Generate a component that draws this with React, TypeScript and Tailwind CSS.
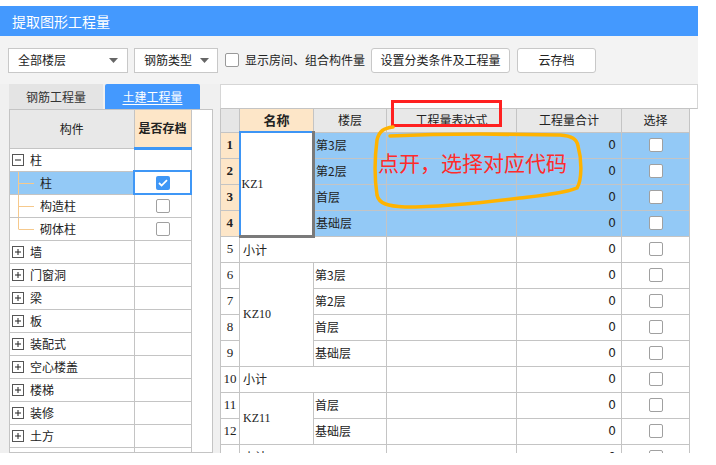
import React from 'react';

// one row in the left component tree
type TreeRow = { label: string; kind: 'parent-open' | 'parent' | 'child'; selected?: boolean; checked?: boolean; last?: boolean };

const treeRows: TreeRow[] = [
  { label: '柱', kind: 'parent-open' },
  { label: '柱', kind: 'child', selected: true, checked: true },
  { label: '构造柱', kind: 'child' },
  { label: '砌体柱', kind: 'child', last: true },
  { label: '墙', kind: 'parent' },
  { label: '门窗洞', kind: 'parent' },
  { label: '梁', kind: 'parent' },
  { label: '板', kind: 'parent' },
  { label: '装配式', kind: 'parent' },
  { label: '空心楼盖', kind: 'parent' },
  { label: '楼梯', kind: 'parent' },
  { label: '装修', kind: 'parent' },
  { label: '土方', kind: 'parent' },
  { label: '基础', kind: 'parent' },
];

type Group = { name: string; floors: string[]; hl?: boolean };

const groups: Group[] = [
  { name: 'KZ1', floors: ['第3层', '第2层', '首层', '基础层'], hl: true },
  { name: 'KZ10', floors: ['第3层', '第2层', '首层', '基础层'] },
  { name: 'KZ11', floors: ['首层', '基础层'] },
];

const Caret = () => (
  <svg width="9" height="5" viewBox="0 0 9 5" className="shrink-0">
    <path d="M0 0h9L4.5 5z" fill="#666" />
  </svg>
);

const Box: React.FC<{ checked?: boolean }> = ({ checked }) =>
  checked ? (
    <span className="inline-flex w-[14px] h-[14px] rounded-[2px] bg-[#3f97f6] items-center justify-center align-middle">
      <svg width="10" height="8" viewBox="0 0 10 8">
        <path d="M1 4l2.6 2.6L9 1.2" stroke="#fff" strokeWidth="1.8" fill="none" />
      </svg>
    </span>
  ) : (
    <span className="inline-block w-[14px] h-[14px] rounded-[2px] border border-[#a0a0a0] bg-white align-middle" />
  );

const PlusMinus: React.FC<{ open?: boolean }> = ({ open }) => (
  <svg width="12" height="12" viewBox="0 0 12 12" className="shrink-0">
    <rect x="0.5" y="0.5" width="11" height="11" fill="#fff" stroke="#555" />
    <path d="M3 6h6" stroke="#222" />
    {!open && <path d="M6 3v6" stroke="#222" />}
  </svg>
);

const cell = 'border border-[#c4c4c4] p-0';
const serif = { fontFamily: '"Liberation Serif", "Noto Sans CJK SC", serif' };
const num = { fontFamily: '"DejaVu Sans", sans-serif' };

export default function App() {
  let n = 0;
  const body: React.ReactNode[] = [];
  groups.forEach((g, gi) => {
    g.floors.forEach((f, i) => {
      n += 1;
      const bg = g.hl ? 'bg-[#93c9f6]' : 'bg-white';
      body.push(
        <tr key={`${gi}-${i}`} className="h-[26px]">
          <td
            className={`${cell} text-center text-[13px] ${g.hl ? 'bg-[#fde6c8] font-bold' : 'bg-white'}`}
            style={serif}
          >
            {n}
          </td>
          {i === 0 && (
            <td
              rowSpan={g.floors.length}
              className={
                g.hl
                  ? 'bg-white border-t-2 border-l-2 border-t-[#3d95f5] border-l-[#3d95f5] border-r-[3px] border-b-[3px] border-r-[#7a7a7a] border-b-[#7a7a7a] pl-[1px] text-[12px]'
                  : `${cell} bg-white pl-[3px] text-[12px]`
              }
              style={serif}
            >
              {g.name}
            </td>
          )}
          <td className={`${cell} ${bg} pl-[1px]`}>{f}</td>
          <td className={`${cell} ${bg}`} />
          <td className={`${cell} ${bg} text-right pr-[5px]`} style={num}>
            0
          </td>
          <td className={`${cell} ${bg} text-center leading-none`}>
            <Box />
          </td>
        </tr>
      );
    });
    n += 1;
    body.push(
      <tr key={`sub-${gi}`} className="h-[26px]">
        <td className={`${cell} text-center text-[13px] bg-white`} style={serif}>
          {n}
        </td>
        <td colSpan={2} className={`${cell} bg-white pl-[3px]`}>
          小计
        </td>
        <td className={`${cell} bg-white`} />
        <td className={`${cell} bg-white text-right pr-[5px]`} style={num}>
          0
        </td>
        <td className={`${cell} bg-white text-center leading-none`}>
          <Box />
        </td>
      </tr>
    );
  });

  return (
    <div
      className="relative w-[716px] h-[465px] overflow-hidden bg-white text-[#222] text-[12px]"
      style={{ fontFamily: '"Noto Sans CJK SC", "Noto Sans", sans-serif' }}
    >
      {/* sliver of the window behind */}
      <div className="h-[6px] bg-white" />

      <div className="w-[698px]">
        <div className="h-[30px] bg-[#4499fe] flex items-center pl-[12px] text-white text-[14px]">提取图形工程量</div>

        {/* toolbar */}
        <div className="h-[48px] bg-[#f3f3f3] flex items-center pl-[8px]">
          <div className="w-[120px] h-[25px] bg-white border border-[#c8c8c8] flex items-center justify-between pl-[9px] pr-[9px]">
            <span>全部楼层</span>
            <Caret />
          </div>
          <div className="ml-[6px] w-[84px] h-[25px] bg-white border border-[#c8c8c8] flex items-center justify-between pl-[9px] pr-[8px]">
            <span>钢筋类型</span>
            <Caret />
          </div>
          <span className="ml-[7px] w-[14px] h-[14px] border border-[#999] rounded-[2px] bg-white" />
          <span className="ml-[6px]">显示房间、组合构件量</span>
          <button className="ml-[6px] w-[139px] h-[25px] bg-white border border-[#c8c8c8] rounded-[3px]">设置分类条件及工程量</button>
          <button className="ml-[7px] w-[79px] h-[25px] bg-white border border-[#c8c8c8] rounded-[3px]">云存档</button>
        </div>

        {/* body */}
        <div className="h-[369px] bg-[#f0f0f0] flex overflow-hidden">
          <div className="pl-[9px] w-[213px] flex flex-col min-h-0">
            <div className="flex h-[25px] shrink-0">
              <div className="w-[94px] bg-[#e4e4e4] flex items-center justify-center text-[#333]">钢筋工程量</div>
              <div className="ml-[2px] w-[95px] bg-[#4499fe] rounded-t-[2px] flex items-center justify-center text-white underline underline-offset-2">
                土建工程量
              </div>
            </div>
            <div className="flex-1 min-h-0 bg-white border border-[#c4c4c4] flex overflow-hidden">
              <table className="border-collapse table-fixed w-[181px] self-start">
                <colgroup>
                  <col className="w-[124px]" />
                  <col className="w-[57px]" />
                </colgroup>
                <thead>
                  <tr className="h-[38px]">
                    <th className="border-r border-b border-[#c4c4c4] bg-[#e8e8e8] font-normal">构件</th>
                    <th className="border-r border-[#c4c4c4] border-b-[3px] border-b-[#3f97f6] bg-[#fde6c8] font-bold">是否存档</th>
                  </tr>
                </thead>
                <tbody>
                  {treeRows.map((r, i) => (
                    <tr key={i} className="h-[23px]">
                      <td className={`border-r border-b border-[#c4c4c4] p-0 ${r.selected ? 'bg-[#93c9f6]' : ''}`}>
                        {r.kind === 'child' ? (
                          <div className="flex items-center h-[22px] pl-[8px]">
                            <svg width="16" height="22" viewBox="0 0 16 22" className="shrink-0">
                              <path d={r.last ? 'M0.5 0v11' : 'M0.5 0v22'} stroke="#f6c98c" />
                              <path d="M0.5 11.5H16" stroke="#f6c98c" />
                            </svg>
                            <span className="ml-[6px]">{r.label}</span>
                          </div>
                        ) : (
                          <div className="flex items-center h-[22px] pl-[2px]">
                            <PlusMinus open={r.kind === 'parent-open'} />
                            <span className="ml-[6px]">{r.label}</span>
                          </div>
                        )}
                      </td>
                      <td
                        className={`p-0 text-center leading-none ${
                          r.selected ? 'border-2 border-[#3f97f6]' : 'border-r border-b border-[#c4c4c4]'
                        }`}
                      >
                        {r.kind === 'child' && <Box checked={r.checked} />}
                      </td>
                    </tr>
                  ))}
                </tbody>
              </table>
            </div>
          </div>

          {/* right table */}
          <div className="ml-[7px] w-[478px] flex flex-col min-h-0">
            <div className="h-[25px] shrink-0 bg-white border border-[#d6d6d6] border-b-[#c4c4c4]" />
            <div className="flex-1 min-h-0 bg-white overflow-hidden">
              <table className="border-collapse table-fixed w-[469px]">
                <colgroup>
                  <col className="w-[19px]" />
                  <col className="w-[74px]" />
                  <col className="w-[73px]" />
                  <col className="w-[130px]" />
                  <col className="w-[105px]" />
                  <col className="w-[68px]" />
                </colgroup>
                <thead>
                  <tr className="h-[23px]">
                    <th className={`${cell} border-t-0 bg-[#e6e6e6]`} />
                    <th className={`${cell} border-t-0 bg-[#fde6c8] font-bold text-[13px]`}>名称</th>
                    <th className={`${cell} border-t-0 bg-[#e8e8e8] font-normal`}>楼层</th>
                    <th className={`${cell} border-t-0 bg-[#e8e8e8] font-normal`}>工程量表达式</th>
                    <th className={`${cell} border-t-0 bg-[#e8e8e8] font-normal`}>工程量合计</th>
                    <th className={`${cell} border-t-0 bg-[#e8e8e8] font-normal`}>选择</th>
                  </tr>
                </thead>
                <tbody>{body}</tbody>
              </table>
            </div>
          </div>
        </div>
      </div>

      {/* hand-drawn annotations over the table */}
      <div className="absolute left-[391px] top-[100px] w-[111px] h-[27px] border-[3px] border-[#ff2020] pointer-events-none" />
      <svg className="absolute left-0 top-0 pointer-events-none" width="716" height="465" viewBox="0 0 716 465">
        <path
          d="M393 127 C384 128 379 131 377 140 C375 155 374 175 377 195 C379 204 388 206 405 207 C440 207 480 203 520 198 C545 195 565 193 577 188 C582 180 582 160 578 146 C577 139 572 136 560 135 L480 134 C440 134 410 135 390 136"
          stroke="#ffb300"
          strokeWidth="3.5"
          fill="none"
          strokeLinecap="round"
          strokeLinejoin="round"
        />
      </svg>
      <div className="absolute left-[378px] top-[152px] text-[21px] leading-none text-[#ff2b2b] pointer-events-none">
        点开，选择对应代码
      </div>
    </div>
  );
}
